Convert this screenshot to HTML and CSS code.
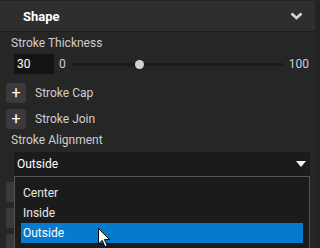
FILE: index.html
```html
<!DOCTYPE html>
<html lang="en">
<head>
<meta charset="UTF-8" />
<title>Shape properties</title>
<link rel="stylesheet" href="styles.css">
</head>
<body>

<div class="window">
  <div class="panel">

    <!-- Section header -->
    <div class="header">
      <span class="title">Shape</span>
      <svg class="chevron" width="13" height="8" viewBox="0 0 13 8">
        <path d="M1.5 1.5 L6.5 6 L11.5 1.5" fill="none" stroke="#d6d6d6" stroke-width="2.6" />
      </svg>
    </div>

    <div class="label">Stroke Thickness</div>
    <div class="slider-row">
      <div class="number">30</div>
      <span class="min">0</span>
      <div class="track">
        <div class="thumb" style="left: 30%;"></div>
      </div>
      <span class="max">100</span>
    </div>

    <div class="prop-row"><div class="plus">+</div><span>Stroke Cap</span></div>
    <div class="prop-row"><div class="plus">+</div><span>Stroke Join</span></div>

    <div class="label">Stroke Alignment</div>
    <div class="select-wrap">
      <div class="select">
        <span>Outside</span>
        <svg class="caret" width="10" height="6" viewBox="0 0 10 6">
          <path d="M0 0 H10 L5 6 Z" fill="#f2f2f2" />
        </svg>
      </div>

      <!-- open dropdown list -->
      <div class="options">
        <div class="option">Center</div>
        <div class="option">Inside</div>
        <div class="option selected">Outside</div>
      </div>
    </div>

    <!-- rows hidden behind the open list -->
    <div class="prop-row"><div class="plus"></div></div>
    <div class="prop-row"><div class="plus"></div></div>
    <div class="prop-row"><div class="plus"></div></div>

  </div>
  <div class="scroll"></div>
</div>

<svg class="cursor" width="13" height="20" viewBox="0 0 13 20">
  <path d="M0.5 0.5 L0.5 16 L4.2 12.4 L7 18.8 L9.2 17.8 L6.5 11.6 L11.5 11.6 Z" fill="#fff" stroke="#000" stroke-width="1" />
</svg>

</body>
</html>
```

FILE: styles.css
```css
body {
  margin: 0;
  background: #262626;
  font-family: Roboto, sans-serif;
  font-size: 12px;
  color: #cfcfcf;
  width: 320px;
  height: 248px;
  overflow: hidden;
  position: relative;
}
.window {
  display: flex;
  height: 248px;
}
.panel {
  width: 315px;
}
.scroll {
  width: 5px;
  background: #232323;
}
.header {
  height: 30px;
  background: #2e2e2e;
  border-top: 1px solid #222;
  border-bottom: 1px solid #1e1e1e;
  display: flex;
  align-items: center;
  justify-content: space-between;
  padding: 0 12px 0 23px;
}
.title {
  font-weight: bold;
  font-size: 13px;
  color: #fff;
}
.chevron {
  display: block;
}
.label {
  padding-left: 11px;
  height: 16px;
  line-height: 16px;
  margin-top: 3px;
}
.slider-row {
  display: flex;
  align-items: center;
  height: 20px;
  margin-top: 3px;
  padding: 0 6px 0 14px;
}
.number {
  width: 37px;
  height: 20px;
  line-height: 20px;
  padding-left: 3px;
  background: #141414;
  color: #fff;
}
.min {
  margin-left: 5px;
}
.track {
  flex: 1;
  height: 3px;
  margin: 0 6px;
  background: #1a1a1a;
  position: relative;
}
.thumb {
  position: absolute;
  top: -3px;
  width: 9px;
  height: 9px;
  border-radius: 50%;
  background: #d2d2d2;
}
.prop-row {
  display: flex;
  align-items: center;
  height: 20px;
  margin-top: 6px;
  padding-left: 6px;
}
.slider-row + .prop-row {
  margin-top: 9px;
}
.plus {
  width: 20px;
  height: 20px;
  line-height: 19px;
  text-align: center;
  background: #3a3a3a;
  border-radius: 2px;
  color: #fff;
  font-size: 16px;
  margin-right: 9px;
}
.select-wrap {
  position: relative;
  margin: 4px 5px 1px 14px;
}
.select {
  height: 24px;
  background: #1b1b1b;
  color: #fff;
  display: flex;
  align-items: center;
  justify-content: space-between;
  padding: 0 4px 0 3px;
}
.caret {
  display: block;
}
.options {
  position: absolute;
  top: 24px;
  left: 0;
  right: 0;
  background: #1b1b1b;
  border: 1px solid #555;
  padding: 6px 6px 8px;
  z-index: 2;
}
.option {
  height: 20px;
  line-height: 20px;
  padding-left: 2px;
  color: #e8e8e8;
}
.option.selected {
  background: #067acc;
  color: #fff;
}
.cursor {
  position: absolute;
  left: 98px;
  top: 228px;
  z-index: 3;
}
```
